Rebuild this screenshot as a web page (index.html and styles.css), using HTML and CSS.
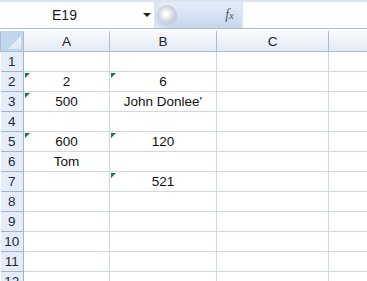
FILE: index.html
```html
<!DOCTYPE html>
<html lang="en">
<head>
    <meta charset="UTF-8">
    <title>Sheet1</title>
    <link rel="stylesheet" href="styles.css">
</head>
<body>
    <div class="formula-bar">
        <div class="name-box">
            <span class="name">E19</span>
            <span class="drop"></span>
        </div>
        <div class="fx-area">
            <span class="knob"></span>
            <span class="fx">f<small>x</small></span>
        </div>
        <div class="formula-input"></div>
    </div>

    <table class="sheet">
        <colgroup>
            <col class="c-row">
            <col class="c-a">
            <col class="c-b">
            <col class="c-c">
            <col class="c-d">
        </colgroup>
        <thead>
            <tr>
                <th class="corner"><span class="corner-tri"></span></th>
                <th>A</th>
                <th>B</th>
                <th>C</th>
                <th></th>
            </tr>
        </thead>
        <tbody>
            <tr><th>1</th><td></td><td></td><td></td><td></td></tr>
            <tr><th>2</th><td class="num">2</td><td class="num">6</td><td></td><td></td></tr>
            <tr><th>3</th><td class="num">500</td><td>John Donlee'</td><td></td><td></td></tr>
            <tr><th>4</th><td></td><td></td><td></td><td></td></tr>
            <tr><th>5</th><td class="num">600</td><td class="num">120</td><td></td><td></td></tr>
            <tr><th>6</th><td>Tom</td><td></td><td></td><td></td></tr>
            <tr><th>7</th><td></td><td class="num">521</td><td></td><td></td></tr>
            <tr><th>8</th><td></td><td></td><td></td><td></td></tr>
            <tr><th>9</th><td></td><td></td><td></td><td></td></tr>
            <tr><th>10</th><td></td><td></td><td></td><td></td></tr>
            <tr><th>11</th><td></td><td></td><td></td><td></td></tr>
            <tr><th>12</th><td></td><td></td><td></td><td></td></tr>
        </tbody>
    </table>
</body>
</html>
```

FILE: styles.css
```css
body {
    margin: 0;
    background: #ffffff;
    font-family: "Liberation Sans", Arial, sans-serif;
    overflow: hidden;
}

/* formula bar */
.formula-bar {
    display: flex;
    height: 26px;
    padding-top: 2px;
    background: #dbe5f1;
    border-bottom: 1px solid #a7bcd6;
}
.name-box {
    width: 154px;
    background: #ffffff;
    display: flex;
    align-items: center;
}
.name {
    flex: 1;
    text-align: center;
    font-size: 14px;
    color: #1a1a1a;
    padding-right: 14px;
}
.drop {
    width: 0;
    height: 0;
    border-left: 4px solid transparent;
    border-right: 4px solid transparent;
    border-top: 4px solid #222;
    margin-right: 3px;
}
.fx-area {
    width: 86px;
    margin-left: 1px;
    border-radius: 12px 0 0 12px;
    background: linear-gradient(#e6eef9, #c4d6ee);
    display: flex;
    align-items: center;
    justify-content: space-between;
    padding: 0 7px 0 2px;
    box-sizing: border-box;
}
.knob {
    width: 20px;
    height: 20px;
    border-radius: 50%;
    background: radial-gradient(circle at 45% 45%, #ffffff 10%, #d4d9e0 45%, #aeb6c2 100%);
}
.fx {
    font-family: "Liberation Serif", serif;
    font-style: italic;
    font-size: 14px;
    color: #555;
}
.fx small {
    font-size: 11px;
}
.formula-input {
    flex: 1;
    margin-left: 2px;
    background: #ffffff;
}

/* grid */
.sheet {
    border-collapse: collapse;
    table-layout: fixed;
    width: 367px;
    margin-top: 2px;
}
.c-row { width: 23px; }
.c-a { width: 86px; }
.c-b { width: 107px; }
.c-c { width: 112px; }
.c-d { width: 39px; }

.sheet th,
.sheet td {
    height: 19px;
    padding: 0;
    font-size: 13.5px;
    font-weight: normal;
    text-align: center;
    color: #111;
    white-space: nowrap;
    overflow: hidden;
}
.sheet td {
    border: 1px solid #d0d7e5;
    position: relative;
}
.sheet td:last-child {
    border-right: none;
}
.sheet thead th {
    height: 20px;
    background: linear-gradient(#f7f9fc, #e4ebf5);
    border: 1px solid #a9bcd4;
    border-top: none;
    color: #222;
}
.sheet thead th:last-child {
    border-right: none;
}
.sheet tbody th {
    background: #e4ecf7;
    border: 1px solid #9eb6ce;
    border-left: none;
    color: #1d2a3a;
}
.sheet .corner {
    background: #c3d5ec;
    position: relative;
}
.corner-tri {
    position: absolute;
    right: 2px;
    bottom: 2px;
    width: 13px;
    height: 13px;
    background: linear-gradient(#f1f5fb, #dde6f2);
    clip-path: polygon(100% 0, 100% 100%, 0 100%);
}

/* number stored as text marker */
.num::before {
    content: "";
    position: absolute;
    left: 1px;
    top: 1px;
    width: 5px;
    height: 5px;
    background: #197b30;
    clip-path: polygon(0 0, 100% 0, 0 100%);
}
```
